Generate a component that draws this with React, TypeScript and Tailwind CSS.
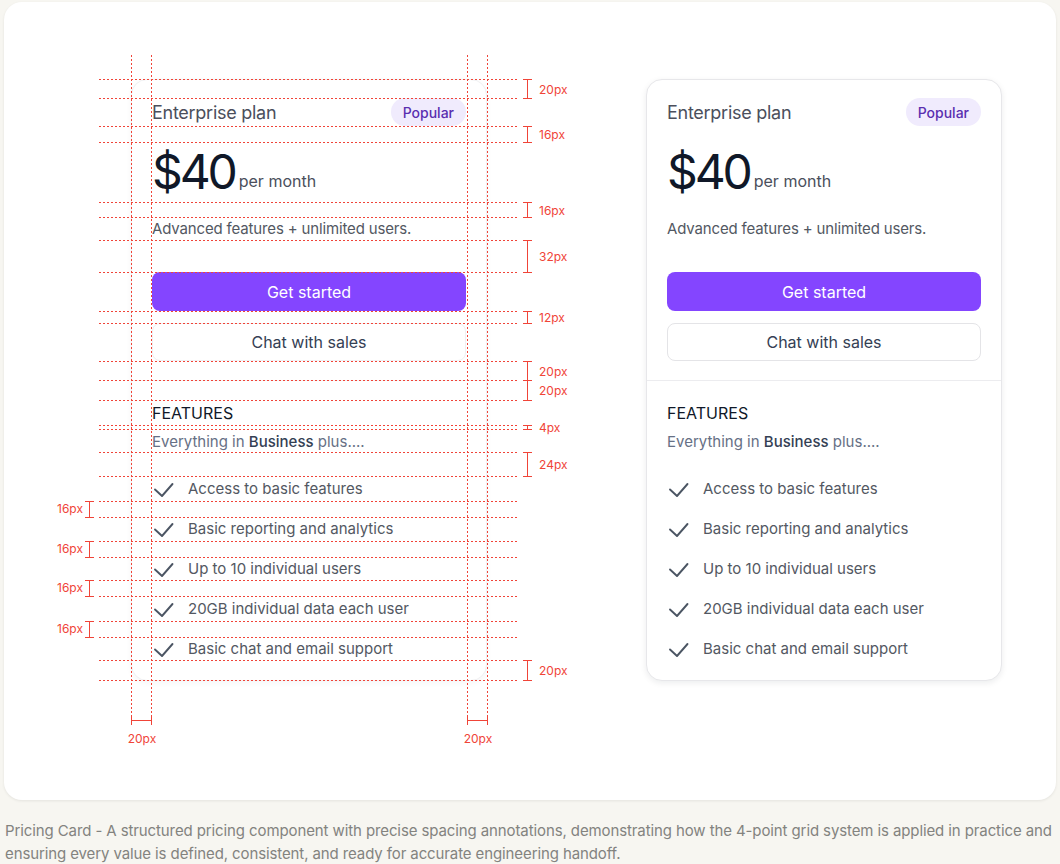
import { Fragment } from "react";

const FONT = "font-['Inter',sans-serif]";

const features = [
  "Access to basic features",
  "Basic reporting and analytics",
  "Up to 10 individual users",
  "20GB individual data each user",
  "Basic chat and email support",
];

// y offsets of the dotted guides, measured from the card's top edge
const guides = [
  0, 19, 47, 63, 123, 138, 161, 193, 232, 244, 282, 301, 321, 346, 350, 373,
  397, 422, 438, 462, 478, 501, 517, 542, 558, 581, 601,
];

// right side spacing markers: [top, bottom, label]
const rightMarks: [number, number, string][] = [
  [0, 19, "20px"],
  [47, 63, "16px"],
  [123, 138, "16px"],
  [161, 193, "32px"],
  [232, 244, "12px"],
  [282, 301, "20px"],
  [301, 321, "20px"],
  [346, 350, "4px"],
  [373, 397, "24px"],
  [581, 601, "20px"],
];

const leftMarks: [number, number][] = [
  [422, 438],
  [462, 478],
  [501, 517],
  [542, 558],
];

function CheckIcon() {
  return (
    <svg width="24" height="24" viewBox="0 0 24 24" className="shrink-0">
      <polyline
        points="3,12.5 10,19 20.5,7"
        fill="none"
        stroke="#4b5563"
        strokeWidth="1.9"
        strokeLinecap="round"
        strokeLinejoin="round"
      />
    </svg>
  );
}

function PricingCard({ faint }: { faint?: boolean }) {
  return (
    <div
      className={`w-[356px] rounded-2xl bg-white border ${
        faint
          ? "border-[#f1f1f3] shadow-[0_2px_6px_rgba(16,24,40,0.04)]"
          : "border-[#e7e7ea] shadow-[0_2px_6px_rgba(16,24,40,0.08)]"
      }`}
    >
      <div className="px-5 pt-[18px] pb-[19px]">
        <div className="flex items-center justify-between h-[28px]">
          <span className="text-[18px] text-[#4b4f5c] tracking-[-0.015em]">
            Enterprise plan
          </span>
          <span className="h-[28px] px-3 rounded-full bg-[#f0ebfd] text-[#5a2fb0] text-[14px] font-medium flex items-center">
            Popular
          </span>
        </div>
        <div className="mt-4 h-[60px] flex items-end gap-[4px]">
          <span className="text-[48px] leading-[60px] text-[#101828] tracking-[-0.065em]">
            $40
          </span>
          <span className="text-[16px] text-[#4b4f5c] leading-[22px] mb-[10px]">
            per month
          </span>
        </div>
        <p className="mt-[15px] text-[15px] leading-[23px] text-[#535862] tracking-[-0.01em]">
          Advanced features + unlimited users.
        </p>
        <button className="mt-8 w-full h-[39px] rounded-lg bg-[#8445ff] text-white text-[16px]">
          Get started
        </button>
        <button
          className={`mt-3 w-full h-[38px] rounded-lg bg-white border text-[16px] text-[#344054] ${
            faint ? "border-[#f0f0f2]" : "border-[#e4e4e7]"
          }`}
        >
          Chat with sales
        </button>
      </div>
      <div className={`h-px ${faint ? "bg-[#f3f3f5]" : "bg-[#ececef]"}`} />
      <div className="px-5 pt-[20px] pb-[19px]">
        <div className="text-[16px] leading-[25px] text-[#101828] uppercase">
          Features
        </div>
        <p className="mt-1 text-[15px] leading-[23px] text-[#667085]">
          Everything in <span className="font-medium text-[#344054]">Business</span>{" "}
          plus....
        </p>
        <ul className="mt-6 flex flex-col gap-4">
          {features.map((f) => (
            <li key={f} className="flex items-center gap-3 h-[24px]">
              <CheckIcon />
              <span className="text-[15px] text-[#535862]">{f}</span>
            </li>
          ))}
        </ul>
      </div>
    </div>
  );
}

const dashH =
  "h-px bg-[repeating-linear-gradient(90deg,#f04438_0_2px,transparent_2px_4px)]";
const dashV =
  "w-px bg-[repeating-linear-gradient(180deg,#f04438_0_2px,transparent_2px_4px)]";

function Annotations() {
  return (
    <div className="absolute inset-0 pointer-events-none">
      {guides.map((y) => (
        <div
          key={y}
          className={`absolute left-[-32px] w-[420px] ${dashH}`}
          style={{ top: y }}
        />
      ))}
      {[0, 20, 336, 356].map((x) => (
        <div
          key={x}
          className={`absolute top-[-24px] h-[662px] ${dashV}`}
          style={{ left: x }}
        />
      ))}

      {rightMarks.map(([a, b, label]) => (
        <Fragment key={`${a}-${label}`}>
          <div
            className="absolute left-[392px] w-[9px] border-t border-b border-[#f04438] flex justify-center"
            style={{ top: a, height: b - a + 1 }}
          >
            <div className="w-px h-full bg-[#f04438]" />
          </div>
          <span
            className="absolute left-[408px] text-[12px] leading-[14px] text-[#f04438]"
            style={{ top: (a + b) / 2 - 6 }}
          >
            {label}
          </span>
        </Fragment>
      ))}

      {leftMarks.map(([a, b]) => (
        <Fragment key={a}>
          <div
            className="absolute left-[-46px] w-[9px] border-t border-b border-[#f04438] flex justify-center"
            style={{ top: a, height: b - a + 1 }}
          >
            <div className="w-px h-full bg-[#f04438]" />
          </div>
          <span
            className="absolute left-[-74px] text-[12px] leading-[14px] text-[#f04438]"
            style={{ top: (a + b) / 2 - 7 }}
          >
            16px
          </span>
        </Fragment>
      ))}

      {[0, 336].map((x) => (
        <Fragment key={x}>
          <div
            className="absolute top-[637px] w-[21px] h-[9px] border-l border-r border-[#f04438] flex items-center"
            style={{ left: x }}
          >
            <div className="h-px w-full bg-[#f04438]" />
          </div>
          <span
            className="absolute top-[653px] w-[40px] text-center text-[12px] leading-[14px] text-[#f04438]"
            style={{ left: x - 9 }}
          >
            20px
          </span>
        </Fragment>
      ))}
    </div>
  );
}

export default function App() {
  return (
    <div className={`min-h-screen bg-[#f7f6f1] px-1 pt-[2px] ${FONT}`}>
      <div className="h-[798px] rounded-[18px] bg-white shadow-[0_1px_3px_rgba(0,0,0,0.08)] flex items-start pl-[127px] pt-[77px]">
        <div className="relative">
          <PricingCard faint />
          <Annotations />
        </div>
        <div className="ml-[159px]">
          <PricingCard />
        </div>
      </div>
      <p className="mt-[19px] px-[1px] text-[15px] leading-[23px] text-[#83837f] tracking-[-0.007em]">
        Pricing Card - A structured pricing component with precise spacing
        annotations, demonstrating how the 4-point grid system is applied in
        practice and ensuring every value is defined, consistent, and ready for
        accurate engineering handoff.
      </p>
    </div>
  );
}
